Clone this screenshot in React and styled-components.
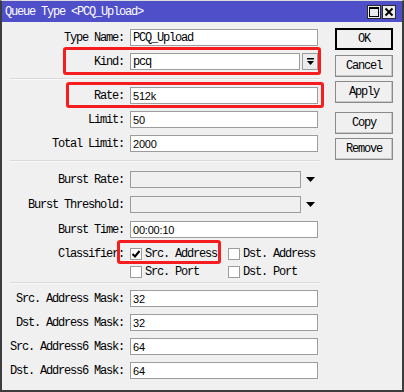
import React from "react"
import styled, { createGlobalStyle } from "styled-components"

const GlobalStyle = createGlobalStyle`
  html, body {
    margin: 0;
    padding: 0;
    background: #f0f0f0;
  }
`

const mono = `"Liberation Mono", "DejaVu Sans Mono", monospace`
const sans = `"Liberation Sans", Arial, sans-serif`

const Window = styled.div`
  position: relative;
  box-sizing: border-box;
  width: 404px;
  height: 392px;
  background: #f0f0f0;
  border: 2px solid #3c3c3c;
  border-top: 1px solid #dcdcdc;
  display: flex;
  flex-direction: column;
  overflow: hidden;
`

const TitleBar = styled.div`
  height: 21px;
  background: #4f4fc9;
  display: flex;
  align-items: center;
  padding-left: 3px;
  padding-right: 6px;
`

const Title = styled.div`
  flex: 1;
  color: #fff;
  font-family: ${mono};
  font-size: 12px;
  letter-spacing: -1.2px;
  white-space: pre;
`

const TitleButton = styled.div`
  box-sizing: border-box;
  width: 14px;
  height: 14px;
  margin-left: 1px;
  background: #ececec;
  border: 1px solid #2a2a2a;
  display: flex;
  align-items: center;
  justify-content: center;
`

const Content = styled.div`
  display: flex;
  padding-top: 7px;
`

const Form = styled.div`
  width: 318px;
  display: flex;
  flex-direction: column;
`

const Section = styled.div`
  display: flex;
  flex-direction: column;
  gap: ${p => p.$gap || 7}px;
`

const Row = styled.div`
  display: grid;
  grid-template-columns: 122px 188px;
  column-gap: 6px;
  align-items: center;
  height: 17px;
`

const Label = styled.div`
  text-align: right;
  font-family: ${mono};
  font-size: 12px;
  letter-spacing: -1.2px;
  color: #000;
  white-space: pre;
`

const Input = styled.div`
  box-sizing: border-box;
  height: 17px;
  width: ${p => p.$width || 188}px;
  background: ${p => (p.$disabled ? "#f0f0f0" : "#fff")};
  border: 1px solid #9c9c9c;
  padding: 0 2px;
  display: flex;
  align-items: center;
  font-family: ${p => (p.$num ? sans : mono)};
  font-size: ${p => (p.$num ? 11 : 12)}px;
  letter-spacing: ${p => (p.$num ? "-0.2px" : "-1.2px")};
  color: #000;
  white-space: pre;
`

const Combo = styled.div`
  display: flex;
  align-items: center;
  gap: ${p => p.$gap}px;
`

const DropButton = styled.div`
  box-sizing: border-box;
  width: 16px;
  height: 17px;
  background: #ececec;
  border: 1px solid #9c9c9c;
  display: flex;
  align-items: center;
  justify-content: center;
`

const Separator = styled.div`
  height: 1px;
  margin: ${p => p.$before}px 0 ${p => p.$after}px 8px;
  background: #d9d9d9;
  border-bottom: 1px solid #fafafa;
`

const ClassifierRow = styled.div`
  display: grid;
  grid-template-columns: 122px 188px;
  column-gap: 6px;
  margin-top: 10px;
`

const ClassifierLabel = styled(Label)`
  height: 12px;
  line-height: 12px;
`

const CheckGrid = styled.div`
  display: grid;
  grid-template-columns: 98px 90px;
  row-gap: 6px;
`

const Check = styled.div`
  display: flex;
  align-items: center;
  gap: 3px;
  height: 12px;
  font-family: ${mono};
  font-size: 12px;
  letter-spacing: -1.2px;
  white-space: pre;
`

const Box = styled.div`
  box-sizing: border-box;
  width: 12px;
  height: 12px;
  background: #fff;
  border: 1px solid #9c9c9c;
  display: flex;
  align-items: center;
  justify-content: center;
`

const Buttons = styled.div`
  margin-left: 15px;
  display: flex;
  flex-direction: column;
`

const Button = styled.div`
  box-sizing: border-box;
  width: 58px;
  height: 22px;
  margin-top: ${p => p.$top ?? 4}px;
  background: #f0f0f0;
  border: 1px solid ${p => (p.$default ? "#000" : "#8a8a8a")};
  box-shadow: ${p => (p.$default ? "inset 0 0 0 1px #000" : "inset -1px -1px 0 #c8c8c8")};
  display: flex;
  align-items: center;
  justify-content: center;
  font-family: ${mono};
  font-size: 12px;
  letter-spacing: -1.2px;
  color: #000;
`

const Highlight = styled.div`
  position: absolute;
  box-sizing: border-box;
  border: 3px solid #f51d1d;
  border-radius: 3px;
  pointer-events: none;
`

const DownBar = () => (
  <svg width="9" height="9" viewBox="0 0 9 9">
    <rect x="1" y="1" width="7" height="1.5" fill="#000" />
    <path d="M1 4 H8 L4.5 8 Z" fill="#000" />
  </svg>
)

const Triangle = styled.svg`
  margin-left: 5px;
`

const CheckMark = () => (
  <svg width="10" height="10" viewBox="0 0 10 10">
    <path d="M1.5 5 L4 7.5 L8.5 2" stroke="#000" strokeWidth="2" fill="none" />
  </svg>
)

const Field = ({ label, children }) => (
  <Row>
    <Label>{label}</Label>
    {children}
  </Row>
)

const CheckItem = ({ checked, children }) => (
  <Check>
    <Box>{checked && <CheckMark />}</Box>
    {children}
  </Check>
)

export default function App() {
  return (
    <>
      <GlobalStyle />
      <Window>
        <TitleBar>
          <Title>Queue Type &lt;PCQ_Upload&gt;</Title>
          <TitleButton>
            <svg width="10" height="10" viewBox="0 0 10 10">
              <rect x="0.5" y="0.5" width="9" height="9" fill="none" stroke="#000" />
              <rect x="0" y="0" width="10" height="2" fill="#000" />
            </svg>
          </TitleButton>
          <TitleButton>
            <svg width="10" height="10" viewBox="0 0 10 10">
              <path d="M1.5 1.5 L8.5 8.5 M8.5 1.5 L1.5 8.5" stroke="#000" strokeWidth="2" />
            </svg>
          </TitleButton>
        </TitleBar>
        <Content>
          <Form>
            <Section>
              <Field label="Type Name:">
                <Input>PCQ_Upload</Input>
              </Field>
              <Field label="Kind:">
                <Combo $gap={2}>
                  <Input $width={170}>pcq</Input>
                  <DropButton>
                    <DownBar />
                  </DropButton>
                </Combo>
              </Field>
            </Section>
            <Separator $before={8} $after={7} />
            <Section>
              <Field label="Rate:">
                <Input $num>512k</Input>
              </Field>
              <Field label="Limit:">
                <Input $num>50</Input>
              </Field>
              <Field label="Total Limit:">
                <Input $num>2000</Input>
              </Field>
            </Section>
            <Separator $before={8} $after={9} />
            <Section $gap={8}>
              <Field label="Burst Rate:">
                <Combo $gap={0}>
                  <Input $width={171} $disabled />
                  <Triangle width="9" height="5" viewBox="0 0 9 5">
                    <path d="M0 0 H9 L4.5 5 Z" fill="#000" />
                  </Triangle>
                </Combo>
              </Field>
              <Field label="Burst Threshold:">
                <Combo $gap={0}>
                  <Input $width={171} $disabled />
                  <Triangle width="9" height="5" viewBox="0 0 9 5">
                    <path d="M0 0 H9 L4.5 5 Z" fill="#000" />
                  </Triangle>
                </Combo>
              </Field>
              <Field label="Burst Time:">
                <Input $num>00:00:10</Input>
              </Field>
            </Section>
            <ClassifierRow>
              <ClassifierLabel>Classifier:</ClassifierLabel>
              <CheckGrid>
                <CheckItem checked>Src. Address</CheckItem>
                <CheckItem>Dst. Address</CheckItem>
                <CheckItem>Src. Port</CheckItem>
                <CheckItem>Dst. Port</CheckItem>
              </CheckGrid>
            </ClassifierRow>
            <Separator $before={4} $after={6} />
            <Section>
              <Field label="Src. Address Mask:">
                <Input $num>32</Input>
              </Field>
              <Field label="Dst. Address Mask:">
                <Input $num>32</Input>
              </Field>
              <Field label="Src. Address6 Mask:">
                <Input $num>64</Input>
              </Field>
              <Field label="Dst. Address6 Mask:">
                <Input $num>64</Input>
              </Field>
            </Section>
          </Form>
          <Buttons>
            <Button $default $top={-1}>OK</Button>
            <Button $top={5}>Cancel</Button>
            <Button>Apply</Button>
            <Button $top={9}>Copy</Button>
            <Button>Remove</Button>
          </Buttons>
        </Content>
        <Highlight style={{ left: 61, top: 46, width: 258, height: 28 }} />
        <Highlight style={{ left: 64, top: 81, width: 258, height: 26 }} />
        <Highlight style={{ left: 115, top: 239, width: 104, height: 24 }} />
      </Window>
    </>
  )
}
